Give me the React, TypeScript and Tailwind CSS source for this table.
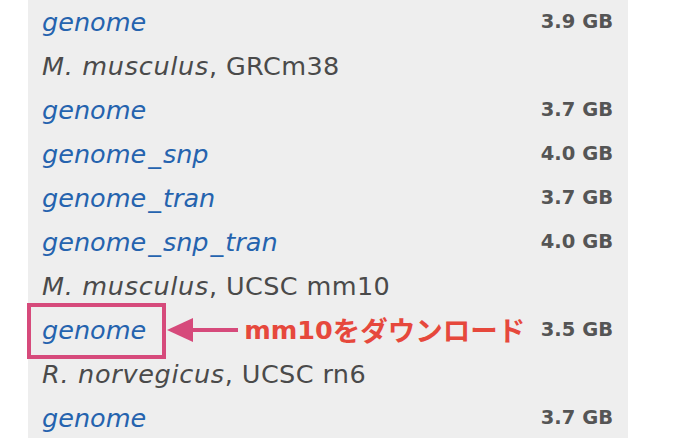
import React from "react";

type Row =
  | { kind: "file"; name: string; size: string; mark?: boolean }
  | { kind: "species"; species: string; build: string };

const rows: Row[] = [
  { kind: "file", name: "genome", size: "3.9 GB" },
  { kind: "species", species: "M. musculus", build: "GRCm38" },
  { kind: "file", name: "genome", size: "3.7 GB" },
  { kind: "file", name: "genome_snp", size: "4.0 GB" },
  { kind: "file", name: "genome_tran", size: "3.7 GB" },
  { kind: "file", name: "genome_snp_tran", size: "4.0 GB" },
  { kind: "species", species: "M. musculus", build: "UCSC mm10" },
  { kind: "file", name: "genome", size: "3.5 GB", mark: true },
  { kind: "species", species: "R. norvegicus", build: "UCSC rn6" },
  { kind: "file", name: "genome", size: "3.7 GB" },
];

// underscores are wider in the reference font
function FileName({ name }: { name: string }) {
  const parts = name.split("_");
  return (
    <a className="italic text-[25.5px] text-[#2563ae]">
      {parts.map((p, i) => (
        <React.Fragment key={i}>
          {i > 0 && <span className="mx-[2px]">_</span>}
          {p}
        </React.Fragment>
      ))}
    </a>
  );
}

export default function App() {
  return (
    <div className="w-[700px] h-[438px] bg-white overflow-hidden" style={{ fontFamily: '"DejaVu Sans", Verdana, sans-serif' }}>
      <div className="ml-[28px] w-[600px] h-[438px] bg-[#eeeeee]">
        {rows.map((r, i) =>
          r.kind === "species" ? (
            <div key={i} className="flex items-center h-[44px] pl-[14px] text-[25.5px] text-[#4a4a4a] whitespace-nowrap">
              <span className="italic tracking-[0.7px]">{r.species}</span>
              <span className="tracking-[0.4px]">, {r.build}</span>
            </div>
          ) : (
            <div key={i} className="relative flex items-center h-[44px] pl-[14px] pr-[15px] whitespace-nowrap">
              <FileName name={r.name} />
              {r.mark && (
                <>
                  <span className="absolute left-[-1px] top-[-5px] w-[139px] h-[56px] border-4 border-[#d64a7b]" />
                  <svg width="71" height="26" viewBox="0 0 71 26" className="ml-[21px] shrink-0">
                    <polygon points="0,13 26,1 26,25" fill="#d64a7b" />
                    <rect x="24" y="11" width="47" height="4" fill="#d64a7b" />
                  </svg>
                  <span className="ml-[6px] text-[25.5px] font-bold text-[#e6483c]">mm10</span>
                  <span
                    className="text-[27.5px] font-bold text-[#e6483c]"
                    style={{ fontFamily: '"Noto Sans CJK JP", sans-serif' }}
                  >
                    をダウンロード
                  </span>
                </>
              )}
              <span className="ml-auto text-[19.5px] font-bold text-[#555555]">{r.size}</span>
            </div>
          )
        )}
      </div>
    </div>
  );
}
